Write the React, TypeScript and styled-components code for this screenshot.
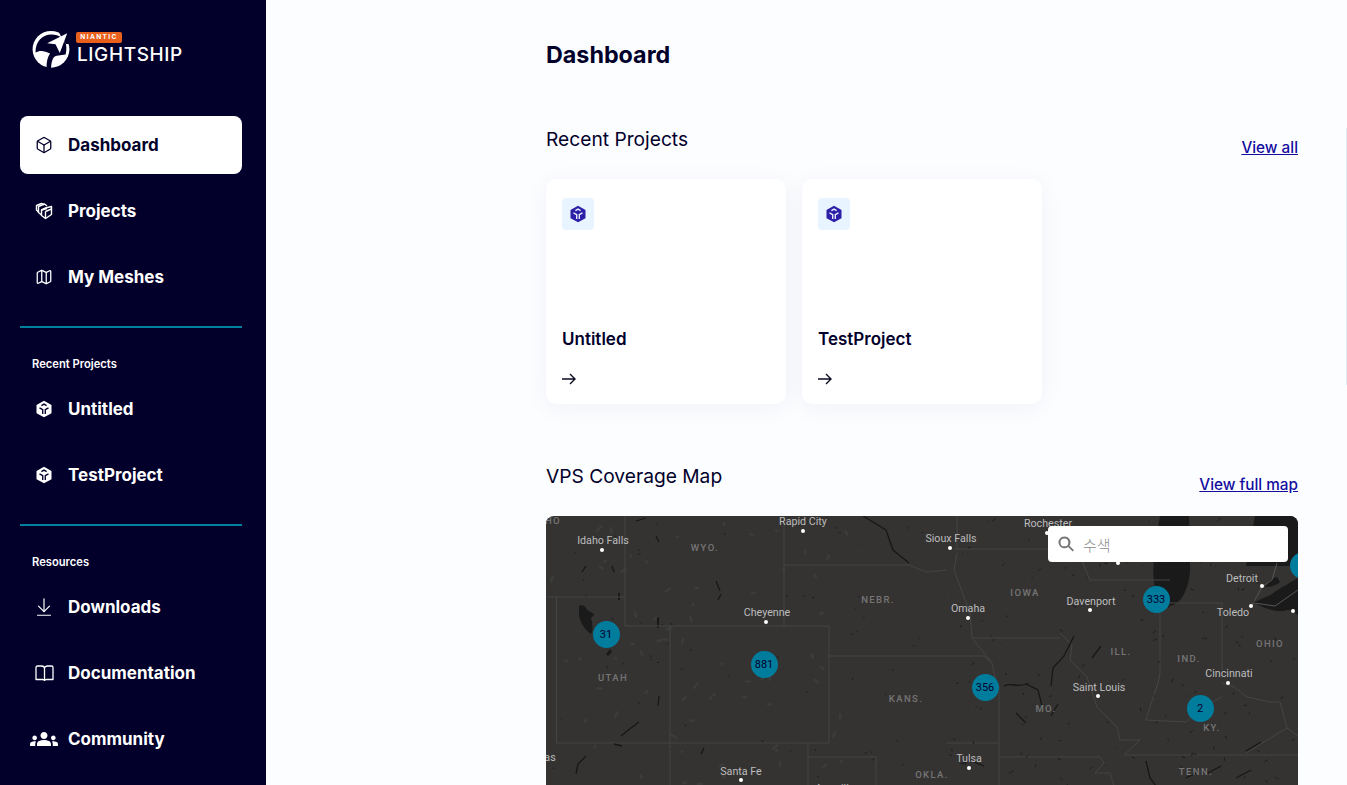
import React from "react";
import styled, { createGlobalStyle } from "styled-components";
import { Box, Map as MapIcon, ArrowDownToLine } from "lucide-react";
import { MdGroups } from "react-icons/md";

const navy = "#02002b";

const GlobalStyle = createGlobalStyle`
  html, body {
    margin: 0;
    height: 100%;
    overflow: hidden;
    background: #fcfdff;
  }
  * {
    box-sizing: border-box;
  }
`;

const UnityCube = ({ size, color, cut }: { size: number; color: string; cut: string }) => (
  <svg width={size} height={size} viewBox="0 0 24 24">
    <path d="M12 1 22 6.500V17.500L12 23 2 17.500V6.500z" fill={color} />
    <path d="M8.500 7.500 12 5.500 15.500 7.500M6 10.500 10.300 13V18.500M18 10.500 13.700 13V18.500" stroke={cut} strokeWidth="1.800" fill="none" />
  </svg>
);

const StackedBoxes = () => (
  <svg width="18" height="18" viewBox="0 0 18 18" fill="none" stroke="currentColor" strokeWidth="1.400" strokeLinejoin="round">
    <path d="M10.500 6 16.500 4.500V12.500L10.500 16.500 6.500 13.500V8z" />
    <path d="M6.500 8 12 6.500M10.500 9.500V16.500M10.500 9.500 16.500 7" />
    <path d="M6.500 13 3.500 10.500V4.500L9.500 2 12 4" />
    <path d="M3.500 10 1.500 8V3.500L6.500 1.500 9 2.500" />
  </svg>
);

const OpenBook = () => (
  <svg width="19" height="16" viewBox="0 0 19 16" fill="none" stroke="currentColor" strokeWidth="1.300" strokeLinejoin="round">
    <path d="M1 14.500V2.500C1 1.700 1.600 1 2.500 1H6.500C8.300 1 9.500 2 9.500 3.500 9.500 2 10.700 1 12.500 1H16.500C17.400 1 18 1.700 18 2.500V14.500H11.500C10.400 14.500 9.500 15 9.500 15.500 9.500 15 8.600 14.500 7.500 14.500z" />
    <path d="M9.500 3.500V15.500" />
  </svg>
);

const CardArrow = () => (
  <svg width="14" height="12" viewBox="0 0 14 12" fill="none" stroke="#0b0b24" strokeWidth="1.400">
    <path d="M0 6H13M8 1l5 5-5 5" />
  </svg>
);

const Logo = () => (
  <LogoWrap>
    <svg width="38" height="38" viewBox="31.500 30 38 38">
      <circle cx="50.500" cy="49.300" r="18.400" fill="#fff" />
      <path
        d="M35 52.500C35 41 42 34.500 51 34.500 55 34.500 58 35.500 61 37.500L65.500 44C66 48 66 52 65 54.500L58 55.500C55.500 55.500 53.500 56.500 52.500 58.500 51.300 61 50.800 64 50.500 68.500L46 68C46 62 47 57 49.500 53.500 44 50.500 39 50 35 52.500Z"
        fill={navy}
      />
      <path d="M57 29H71V44H65.500L61 37.500z" fill={navy} />
      <path d="M66.700 33.300 46.700 43.300 55 44.300 59.300 53z" fill="#fff" />
    </svg>
    <LogoText>
      <LogoBadge>NIANTIC</LogoBadge>
      <LogoName>LIGHTSHIP</LogoName>
    </LogoText>
  </LogoWrap>
);

const NavItem = ({ icon, label, active }: { icon: React.ReactNode; label: string; active?: boolean }) => (
  <NavRow $active={active}>
    <NavIcon>{icon}</NavIcon>
    <span>{label}</span>
  </NavRow>
);

const ProjectCard = ({ name }: { name: string }) => (
  <Card>
    <CardIcon>
      <UnityCube size={18} color="#2d1fa8" cut="#e8f4ff" />
    </CardIcon>
    <CardName>{name}</CardName>
    <CardArrow />
  </Card>
);

// label and dot centres, relative to the map's top left corner
const cities = [
  { name: "Rapid City", x: 257, y: 6, dotX: 257, dotY: 15 },
  { name: "Idaho Falls", x: 57, y: 25, dotX: 56, dotY: 34 },
  { name: "Sioux Falls", x: 405, y: 23, dotX: 404, dotY: 32 },
  { name: "Rochester", x: 502, y: 8, dotX: 501, dotY: 17 },
  { name: "Cheyenne", x: 221, y: 97, dotX: 220, dotY: 106 },
  { name: "Omaha", x: 422, y: 93, dotX: 422, dotY: 102 },
  { name: "Davenport", x: 545, y: 86, dotX: 544, dotY: 94 },
  { name: "Detroit", x: 696, y: 63, dotX: 716, dotY: 70 },
  { name: "Toledo", x: 687, y: 97, dotX: 705, dotY: 90 },
  { name: "Cleveland", x: 777, y: 89, dotX: 747, dotY: 95 },
  { name: "Cincinnati", x: 683, y: 158, dotX: 682, dotY: 167 },
  { name: "Saint Louis", x: 553, y: 172, dotX: 552, dotY: 180 },
  { name: "Tulsa", x: 423, y: 243, dotX: 423, dotY: 252 },
  { name: "Santa Fe", x: 195, y: 256, dotX: 195, dotY: 264 },
  { name: "Amarillo", x: 289, y: 273, dotX: 289, dotY: 284 },
  { name: "Las Vegas", x: -15, y: 242, dotX: -30, dotY: 0 },
];

const states = [
  { name: "HO", x: 7, y: 5 },
  { name: "WYO.", x: 159, y: 32 },
  { name: "NEBR.", x: 332, y: 84 },
  { name: "IOWA", x: 479, y: 77 },
  { name: "UTAH", x: 67, y: 162 },
  { name: "KANS.", x: 360, y: 183 },
  { name: "ILL.", x: 575, y: 136 },
  { name: "IND.", x: 643, y: 143 },
  { name: "OHIO", x: 724, y: 128 },
  { name: "MO.", x: 500, y: 193 },
  { name: "KY.", x: 666, y: 212 },
  { name: "OKLA.", x: 386, y: 259 },
  { name: "TENN.", x: 650, y: 256 },
];

const clusters = [
  { n: "31", x: 60, y: 118 },
  { n: "881", x: 218, y: 148 },
  { n: "356", x: 439, y: 171 },
  { n: "333", x: 610, y: 83 },
  { n: "2", x: 654, y: 192 },
  { n: "", x: 757, y: 49 },
];

// small lakes and creeks, scattered with a fixed seed so every run looks alike
const scatter = (count: number, x0: number, x1: number, len: number, seed: number) => {
  let s = seed;
  const next = () => {
    s = (s * 16807) % 2147483647;
    return s / 2147483647;
  };
  let d = "";
  for (let i = 0; i < count; i++) {
    const x = x0 + next() * (x1 - x0);
    const y = next() * 300;
    d += `M${x.toFixed(1)} ${y.toFixed(1)}l${((next() - 0.5) * len).toFixed(1)} ${((next() - 0.5) * len).toFixed(1)}`;
  }
  return d;
};

const westSpecks = scatter(70, 0, 400, 5, 4711);
const eastSpecks = scatter(170, 400, 752, 7, 1933);
const westPatches = scatter(70, 0, 300, 9, 8123);

const CoverageMap = () => (
  <MapBox>
    <MapDrawing width="752" height="300" viewBox="0 0 752 300">
      <path d={westPatches} stroke="#3c3c3b" strokeWidth="2.500" fill="none" strokeLinecap="round" />
      {/* lakes */}
      <g fill="#191a19">
        <path d="M614 0H643L644 47C645 62 640 78 634 84 630 88 626 90 620 91 624 82 614 72 609 71 606 60 607 40 614 0Z" />
        <path d="M709 0H752V50H700z" />
        <path d="M708 87C716 90 724 96 738 95 744 92 748 96 752 99V62C745 66 735 72 730 75 722 82 714 82 708 87Z" />
        <path d="M719 71C722 66 726 62 731 61L734 66C730 70 724 71 719 71Z" />
        <path d="M33 90C36 88 40 90 41 94 44 96 48 97 48 99L45 102C47 110 47 115 45 118 40 115 35 108 33 100Z" />
        <path d="M60 138 64 133 66 136 62 140zM72 77h2v7h-2zM111 101h2v11h-2z" />
      </g>
      {/* state borders */}
      <g stroke="#454545" strokeWidth="1" fill="none">
        <path d="M0 81H79M79 0V110H283M124 110V300M10.500 81V227H283M283 110V227M238 0V110M238 49H363L380 56 400 54M283 140H438L446 147" />
        <path d="M262 227V300M262 241H330V300M411 0V32M408 33H531L544 64H624M426 122H514M453 170V300M401 227H453M453 241H554L558 247 549 257H564L568 270" />
        <path d="M578 239H752M614 87V157L612 167 604 191 600 204 640 206 658 190 676 181M614 87H676V154" />
        <path d="M676 167 688 171 701 181 724 186 734 186 741 212 700 237M741 212 752 220" />
        <path d="M514 117 526 129 524 144 541 161 551 191 571 211 574 224 594 224 578 239M411 37 408 54 424 97 426 122 446 147 450 165" />
      </g>
      <path d="M708 87 729 90 752 74M731 47 726 64 716 71 706 89" stroke="#555" strokeWidth="1" fill="none" />
      {/* rivers */}
      <g stroke="#171717" fill="none" strokeWidth="1.300">
        <path d="M317 0 340 14 347 34 363 47" />
        <path d="M90 5 100 2M110 20 113 26M40 50 36 56M66 50l2 6M170 65l4 10M175 78 172 84M113 180 112 190M75 220l10-8 8-6M68 228l8 2M40 240l-8 8-2 10M158 232 155 238" />
        <path d="M528 120 518 140 507 152 505 170M555 130 546 142M458 170C466 166 472 172 480 168L492 174 496 190M505 200 512 188M470 197 480 207M415 248 425 244M428 246 438 250" />
        <path d="M700 235 715 226M640 262 652 256M660 258 675 250M690 262 705 254M600 245 604 262 610 270M612 280 632 292M688 280 705 270" />
      </g>
      <path d={westSpecks} stroke="#1d1d1d" strokeWidth="0.900" fill="none" />
      <path d={eastSpecks} stroke="#1d1d1d" strokeWidth="1" fill="none" />
    </MapDrawing>
    {states.map((s) => (
      <StateLabel key={s.name} style={{ left: s.x, top: s.y }}>{s.name}</StateLabel>
    ))}
    {cities.map((c) => (
      <React.Fragment key={c.name}>
        <CityLabel style={{ left: c.x, top: c.y }}>{c.name}</CityLabel>
        <CityDot style={{ left: c.dotX, top: c.dotY }} />
      </React.Fragment>
    ))}
    <CityDot style={{ left: 572, top: 47 }} />
    {clusters.map((c) => (
      <Cluster key={c.x} style={{ left: c.x, top: c.y }}>{c.n}</Cluster>
    ))}
    <SearchBox>
      <svg width="18" height="18" viewBox="0 0 18 18">
        <path d="M7.400 1.500a5.900 5.900 0 1 0 3.700 10.500l4.600 4.600 1.300-1.300-4.600-4.600A5.900 5.900 0 0 0 7.400 1.500zm0 2a3.900 3.900 0 1 1 0 7.800 3.900 3.900 0 0 1 0-7.800z" fill="#757575" />
      </svg>
      <SearchText>수색</SearchText>
    </SearchBox>
  </MapBox>
);

const App = () => (
  <Page>
    <GlobalStyle />
    <Sidebar>
      <Logo />
      <NavGroup>
        <NavItem active icon={<Box size={18} strokeWidth={1.7} />} label="Dashboard" />
        <NavItem icon={<StackedBoxes />} label="Projects" />
        <NavItem icon={<MapIcon size={18} strokeWidth={1.7} />} label="My Meshes" />
      </NavGroup>
      <Divider />
      <GroupTitle>Recent Projects</GroupTitle>
      <NavGroup>
        <NavItem icon={<UnityCube size={18} color="#fff" cut={navy} />} label="Untitled" />
        <NavItem icon={<UnityCube size={18} color="#fff" cut={navy} />} label="TestProject" />
      </NavGroup>
      <Divider />
      <GroupTitle>Resources</GroupTitle>
      <NavGroup>
        <NavItem icon={<ArrowDownToLine size={22} strokeWidth={1.3} />} label="Downloads" />
        <NavItem icon={<OpenBook />} label="Documentation" />
        <NavItem icon={<MdGroups size={28} />} label="Community" />
      </NavGroup>
    </Sidebar>
    <Main>
      <Content>
        <PageTitle>Dashboard</PageTitle>
        <SectionHead>
          <SectionTitle>Recent Projects</SectionTitle>
          <SectionLink href="#">View all</SectionLink>
        </SectionHead>
        <CardRow>
          <ProjectCard name="Untitled" />
          <ProjectCard name="TestProject" />
        </CardRow>
        <MapHead>
          <SectionTitle>VPS Coverage Map</SectionTitle>
          <SectionLink href="#">View full map</SectionLink>
        </MapHead>
        <CoverageMap />
      </Content>
    </Main>
    <EdgeLine />
  </Page>
);

const Page = styled.div`
  position: relative;
  display: flex;
  height: 785px;
  overflow: hidden;
  font-family: "Inter", "Liberation Sans", sans-serif;
  color: ${navy};
`;

const EdgeLine = styled.div`
  position: absolute;
  top: 128px;
  right: 0;
  width: 1px;
  height: 257px;
  background: #dcebf5;
`;

const Sidebar = styled.aside`
  width: 266px;
  flex-shrink: 0;
  height: 785px;
  padding: 30px 24px 0 20px;
  background: ${navy};
  color: #fff;
`;

const LogoWrap = styled.div`
  display: flex;
  align-items: flex-start;
  gap: 6px;
  height: 38px;
  margin: 0 0 48px 12px;
`;

const LogoText = styled.div`
  display: flex;
  flex-direction: column;
  align-items: flex-start;
  padding-top: 2px;
`;

const LogoBadge = styled.div`
  width: 46px;
  height: 11px;
  border-radius: 2px;
  background: #e8601c;
  color: #fff;
  font-size: 6.5px;
  font-weight: 700;
  line-height: 11px;
  letter-spacing: 1.4px;
  text-align: center;
`;

const LogoName = styled.div`
  margin-left: 1px;
  font-size: 19px;
  line-height: 24px;
  font-weight: 500;
  letter-spacing: 0.6px;
`;

const NavGroup = styled.nav`
  display: flex;
  flex-direction: column;
  gap: 8px;
`;

const NavRow = styled.div<{ $active?: boolean }>`
  display: flex;
  align-items: center;
  height: 58px;
  padding-left: 15px;
  border-radius: 8px;
  background: ${(p) => (p.$active ? "#fff" : "transparent")};
  color: ${(p) => (p.$active ? navy : "#fff")};
  font-size: 17px;
  font-weight: 700;
`;

const NavIcon = styled.span`
  display: flex;
  justify-content: center;
  width: 18px;
  margin-right: 15px;

  & > svg {
    flex-shrink: 0;
  }
`;

const Divider = styled.div`
  height: 2px;
  margin-top: 20px;
  background: #00809d;
`;

const GroupTitle = styled.div`
  margin: 29px 0 9px 12px;
  height: 14px;
  font-size: 11.2px;
  line-height: 14px;
  font-weight: 600;
`;

const Main = styled.main`
  flex: 1;
  min-width: 0;
  padding: 0 49px 0 280px;
  background: #fcfdff;
`;

const Content = styled.div`
  width: 752px;
`;

const PageTitle = styled.h1`
  margin: 0;
  padding-top: 41px;
  font-size: 23.3px;
  line-height: 28px;
  font-weight: 700;
`;

const SectionHead = styled.div`
  display: flex;
  justify-content: space-between;
  align-items: flex-end;
  margin-top: 57px;
  height: 32px;
`;

const MapHead = styled(SectionHead)`
  margin-top: 59px;
`;

const SectionTitle = styled.h2`
  margin: 0 0 6px;
  font-size: 19.2px;
  line-height: 26px;
  font-weight: 400;
`;

const SectionLink = styled.a`
  margin-bottom: 1px;
  color: #140d9f;
  font-size: 15.3px;
  line-height: 18px;
  font-weight: 500;
`;

const CardRow = styled.div`
  display: flex;
  gap: 16px;
  margin-top: 21px;
`;

const Card = styled.div`
  display: flex;
  flex-direction: column;
  align-items: flex-start;
  width: 240px;
  height: 225px;
  padding: 19px 16px;
  border-radius: 10px;
  background: #fff;
  box-shadow: 0 4px 24px rgba(20, 30, 80, 0.05);
`;

const CardIcon = styled.div`
  display: flex;
  align-items: center;
  justify-content: center;
  width: 32px;
  height: 32px;
  border-radius: 4px;
  background: #e8f4ff;
`;

const CardName = styled.div`
  margin-top: 98px;
  margin-bottom: 23px;
  font-size: 17px;
  line-height: 22px;
  font-weight: 600;
`;

const MapBox = styled.div`
  position: relative;
  height: 300px;
  margin-top: 21px;
  border-radius: 8px;
  overflow: hidden;
  background: #343332;
  font-family: "Roboto", "Liberation Sans", sans-serif;
`;

const MapDrawing = styled.svg`
  display: block;
`;

const CityLabel = styled.span`
  position: absolute;
  transform: translate(-50%, -50%);
  color: #bdbdbd;
  font-size: 10.7px;
  line-height: 14px;
  white-space: nowrap;
`;

const CityDot = styled.span`
  position: absolute;
  width: 4px;
  height: 4px;
  margin: -2px 0 0 -2px;
  border-radius: 50%;
  background: #fff;
`;

const StateLabel = styled.span`
  position: absolute;
  transform: translate(-50%, -50%);
  color: #757575;
  font-size: 9.5px;
  line-height: 12px;
  font-weight: 500;
  letter-spacing: 1.4px;
  white-space: nowrap;
`;

const Cluster = styled.div`
  position: absolute;
  display: flex;
  align-items: center;
  justify-content: center;
  width: 27px;
  height: 27px;
  margin: -13.5px 0 0 -13.5px;
  border-radius: 50%;
  background: #007c9c;
  color: ${navy};
  font-size: 11px;
`;

const SearchBox = styled.div`
  position: absolute;
  top: 10px;
  left: 502px;
  display: flex;
  align-items: center;
  width: 240px;
  height: 36px;
  padding-left: 9px;
  border-radius: 4px;
  background: #fff;
`;

const SearchText = styled.span`
  margin-left: 8px;
  color: #8a8a8a;
  font-family: "Noto Sans CJK KR", sans-serif;
  font-size: 15px;
  font-weight: 300;
`;

export default App;
